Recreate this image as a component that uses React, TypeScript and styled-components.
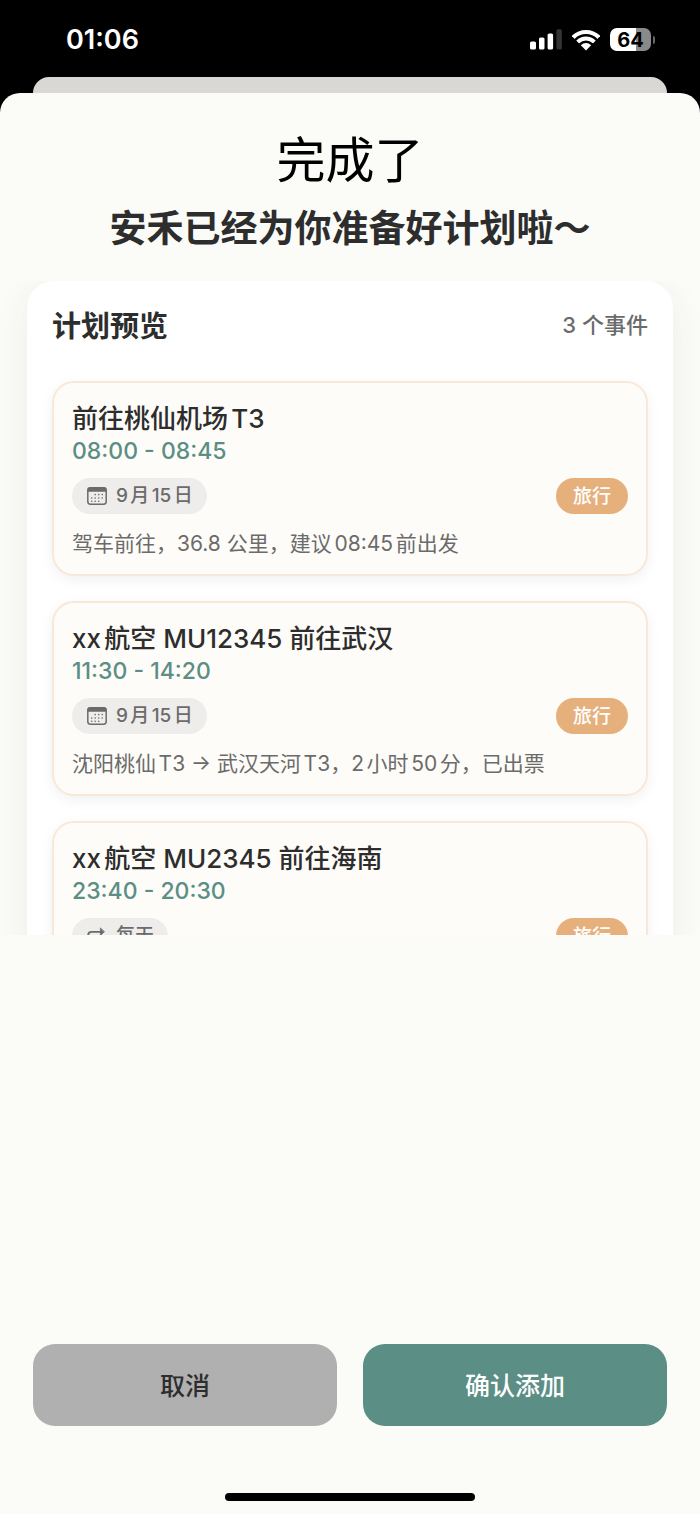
import React from "react";
import styled, { createGlobalStyle } from "styled-components";

const GlobalStyle = createGlobalStyle`
  *, *::before, *::after { box-sizing: border-box; }
  body {
    margin: 0;
    background: #000;
    font-family: Inter, "Noto Sans CJK SC", sans-serif;
    text-autospace: normal;
    -webkit-font-smoothing: antialiased;
  }
  h1, h2, h3, p, ul { margin: 0; padding: 0; }
  button { font-family: inherit; }
`;

const Screen = styled.div`
  display: flex;
  flex-direction: column;
  height: 100vh;
  min-height: 1200px;
  background: #000;
`;

const StatusBar = styled.header`
  flex: none;
  display: flex;
  align-items: center;
  justify-content: space-between;
  height: 77px;
  padding: 2px 45px 0 66px;
  color: #fff;
`;

const Clock = styled.time`
  font-size: 27px;
  line-height: 36px;
  font-weight: 600;
`;

const StatusIcons = styled.div`
  display: flex;
  align-items: center;
  gap: 10px;
`;

const Battery = styled.div`
  display: flex;
  align-items: center;
  gap: 2px;
`;

const BatteryBody = styled.div<{ $level: number }>`
  width: 41px;
  height: 23px;
  border-radius: 7px;
  background: linear-gradient(
    to right,
    #fff ${({ $level }) => $level}%,
    #8a8a8a ${({ $level }) => $level}%
  );
  color: #000;
  font-size: 20px;
  line-height: 24px;
  font-weight: 700;
  text-align: center;
`;

const BatteryCap = styled.div`
  width: 2px;
  height: 8px;
  border-radius: 0 2px 2px 0;
  background: #666;
`;

const BackSheet = styled.div`
  flex: none;
  height: 16px;
  margin: 0 33px;
  border-radius: 16px 16px 0 0;
  background: #d9d8d4;
`;

const Sheet = styled.main`
  flex: 1;
  min-height: 0;
  display: flex;
  flex-direction: column;
  border-radius: 20px 20px 0 0;
  background: #fbfbf7;
`;

const Heading = styled.div`
  flex: none;
  display: flex;
  flex-direction: column;
  gap: 4px;
  padding: 33px 24px 24px;
  text-align: center;
`;

const Title = styled.h1`
  color: #000;
  font-size: 49px;
  line-height: 70px;
  font-weight: 400;
`;

const Subtitle = styled.h2`
  color: #2d2d2d;
  font-size: 37px;
  line-height: 57px;
  font-weight: 700;
`;

const Scroller = styled.div`
  flex: 0 1 654px;
  min-height: 0;
  padding: 0 27px;
  overflow-y: auto;
  scrollbar-width: none;
`;

const Panel = styled.section`
  padding: 26px 25px;
  border-radius: 27px;
  background: #fff;
  box-shadow: 0 8px 36px rgba(60, 70, 50, 0.07);
`;

const PanelHeader = styled.div`
  display: flex;
  align-items: flex-start;
  justify-content: space-between;
  margin-bottom: 34px;
`;

const PanelTitle = styled.h3`
  color: #2d2d2d;
  font-size: 29px;
  line-height: 40px;
  font-weight: 700;
`;

const Count = styled.span`
  color: #6b6b6b;
  font-size: 22px;
  line-height: 36px;
  font-weight: 500;
`;

const EventList = styled.ul`
  display: flex;
  flex-direction: column;
  gap: 25px;
  list-style: none;
`;

const EventCard = styled.li`
  padding: 19px 18px 15px;
  border: 2px solid #f8e8d9;
  border-radius: 22px;
  background: #fefcf8;
  box-shadow: 0 4px 14px rgba(0, 0, 0, 0.06);
`;

const EventTitle = styled.h4`
  margin: 0;
  color: #2d2d2d;
  font-size: 26px;
  line-height: 34px;
  font-weight: 500;
`;

const EventTime = styled.p`
  color: #5b8e85;
  font-size: 23px;
  line-height: 30px;
  font-weight: 500;
`;

const MetaRow = styled.div`
  display: flex;
  align-items: center;
  justify-content: space-between;
  margin: 12px 0 15px;
`;

const DatePill = styled.span`
  display: flex;
  align-items: center;
  gap: 9px;
  height: 36px;
  padding: 0 14px 0 15px;
  border-radius: 18px;
  background: #eeedeb;
  color: #6b6b6b;
  font-size: 19px;
  line-height: 28px;
  font-weight: 500;
`;

const Tag = styled.span`
  height: 36px;
  padding: 0 17px;
  border-radius: 18px;
  background: #e6b07d;
  color: #fff;
  font-size: 19px;
  line-height: 38px;
  font-weight: 500;
`;

const Description = styled.p`
  color: #6b6b6b;
  font-size: 21px;
  line-height: 30px;
  font-weight: 400;
`;

const Actions = styled.div`
  flex: none;
  display: grid;
  grid-template-columns: 1fr 1fr;
  gap: 26px;
  margin-top: auto;
  padding: 0 33px;
`;

const ActionButton = styled.button<{ $primary?: boolean }>`
  height: 82px;
  padding: 2px 0 0;
  border: 0;
  border-radius: 22px;
  background: ${({ $primary }) => ($primary ? "#5b8e85" : "#b0b0b0")};
  color: ${({ $primary }) => ($primary ? "#fff" : "#2d2d2d")};
  font-size: 25px;
  line-height: 36px;
  font-weight: 500;
`;

const HomeIndicator = styled.div`
  flex: none;
  align-self: center;
  width: 250px;
  height: 8px;
  margin: 67px 0 13px;
  border-radius: 4px;
  background: #000;
`;

const SignalIcon = () => (
  <svg width="32" height="21" viewBox="0 0 32 21" aria-hidden="true">
    <rect x="0" y="12.5" width="6" height="8" rx="1.6" fill="#fff" />
    <rect x="9" y="8.5" width="5.5" height="12" rx="1.6" fill="#fff" />
    <rect x="17.6" y="4.5" width="5.5" height="16" rx="1.6" fill="#fff" />
    <rect x="26.4" y="0.3" width="5.5" height="20.2" rx="1.6" fill="#333" />
  </svg>
);

const WifiIcon = () => (
  <svg width="28" height="22" viewBox="0 0 28 22" aria-hidden="true">
    <clipPath id="wifi-wedge">
      <path d="M14 21.5 L-6 1.2 L-6 -6 L34 -6 L34 1.2 Z" />
    </clipPath>
    <g clipPath="url(#wifi-wedge)" fill="none" stroke="#fff">
      <circle cx="14" cy="21" r="18" strokeWidth="4.2" />
      <circle cx="14" cy="21" r="11.6" strokeWidth="4" />
      <circle cx="14" cy="21" r="3.5" strokeWidth="7" />
    </g>
  </svg>
);

const calendarDots = [
  [8.2, 7.6], [11.7, 7.6], [15.2, 7.6],
  [4.7, 11], [8.2, 11], [11.7, 11], [15.2, 11],
  [4.7, 14.2], [8.2, 14.2], [11.7, 14.2],
];

const CalendarIcon = () => (
  <svg width="20" height="18" viewBox="0 0 20 18" fill="#6b6b6b" aria-hidden="true">
    <rect x="0.8" y="0.8" width="18.4" height="16.4" rx="2.6" fill="none" stroke="#6b6b6b" strokeWidth="1.5" />
    <path d="M0.4 4.8V3Q0.4 0.2 3.2 0.2H16.8Q19.6 0.2 19.6 3V4.8Z" />
    {calendarDots.map(([x, y]) => (
      <circle key={`${x}-${y}`} cx={x} cy={y} r="0.8" />
    ))}
  </svg>
);

const RepeatIcon = () => (
  <svg width="20" height="18" viewBox="0 0 20 18" fill="none" stroke="#6b6b6b" strokeWidth="1.9" strokeLinecap="round" aria-hidden="true">
    <path d="M1.2 9V8.4Q1.2 4.9 4.7 4.9H13.5" />
    <path d="M18.8 9V9.6Q18.8 13.1 15.3 13.1H6.5" />
    <path d="M13.4 1.3V8.5L17.2 4.9Z" fill="#6b6b6b" strokeWidth="0.8" strokeLinejoin="round" />
    <path d="M6.6 9.5V16.7L2.8 13.1Z" fill="#6b6b6b" strokeWidth="0.8" strokeLinejoin="round" />
  </svg>
);

interface PlanEvent {
  title: string;
  time: string;
  date: string;
  repeats?: boolean;
  tag: string;
  description: string;
}

const events: PlanEvent[] = [
  {
    title: "前往桃仙机场T3",
    time: "08:00 - 08:45",
    date: "9月15日",
    tag: "旅行",
    description: "驾车前往，36.8 公里，建议08:45前出发",
  },
  {
    title: "xx航空 MU12345 前往武汉",
    time: "11:30 - 14:20",
    date: "9月15日",
    tag: "旅行",
    description: "沈阳桃仙T3 → 武汉天河T3，2小时50分，已出票",
  },
  {
    title: "xx航空 MU2345 前往海南",
    time: "23:40 - 20:30",
    date: "每天",
    repeats: true,
    tag: "旅行",
    description: "",
  },
];

export default function App() {
  return (
    <>
      <GlobalStyle />
      <Screen>
        <StatusBar>
          <Clock>01:06</Clock>
          <StatusIcons>
            <SignalIcon />
            <WifiIcon />
            <Battery>
              <BatteryBody $level={64}>64</BatteryBody>
              <BatteryCap />
            </Battery>
          </StatusIcons>
        </StatusBar>
        <BackSheet />
        <Sheet lang="zh-CN">
          <Heading>
            <Title>完成了</Title>
            <Subtitle>安禾已经为你准备好计划啦～</Subtitle>
          </Heading>
          <Scroller>
            <Panel>
              <PanelHeader>
                <PanelTitle>计划预览</PanelTitle>
                <Count>{events.length} 个事件</Count>
              </PanelHeader>
              <EventList>
                {events.map((event) => (
                  <EventCard key={event.title}>
                    <EventTitle>{event.title}</EventTitle>
                    <EventTime>{event.time}</EventTime>
                    <MetaRow>
                      <DatePill>
                        {event.repeats ? <RepeatIcon /> : <CalendarIcon />}
                        <span>{event.date}</span>
                      </DatePill>
                      <Tag>{event.tag}</Tag>
                    </MetaRow>
                    {event.description && <Description>{event.description}</Description>}
                  </EventCard>
                ))}
              </EventList>
            </Panel>
          </Scroller>
          <Actions>
            <ActionButton type="button">取消</ActionButton>
            <ActionButton type="button" $primary>
              确认添加
            </ActionButton>
          </Actions>
          <HomeIndicator />
        </Sheet>
      </Screen>
    </>
  );
}
